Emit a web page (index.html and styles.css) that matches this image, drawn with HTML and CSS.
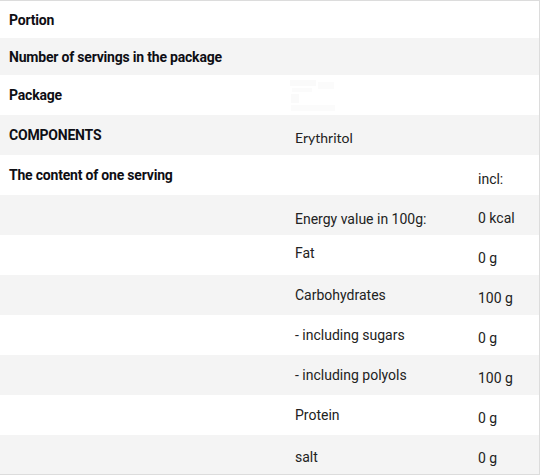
FILE: index.html
```html
<!DOCTYPE html>
<html>
<head>
<meta charset="utf-8">
<link rel="stylesheet" href="styles.css">
</head>
<body>
<table class="spec">
  <colgroup>
    <col class="c1"><col class="c2"><col class="c3">
  </colgroup>
  <tr class="short"><th>Portion</th><td></td><td></td></tr>
  <tr class="short alt"><th>Number of servings in the package</th><td></td><td></td></tr>
  <tr><th>Package</th><td class="pkg"><svg class="ghost" width="52" height="36" viewBox="0 0 52 36"><rect x="2" y="3" width="26" height="6" fill="#fafafa"/><rect x="30" y="5" width="16" height="7" fill="#fbfbfb"/><rect x="4" y="11" width="20" height="4" fill="#fbfbfb"/><rect x="3" y="17" width="8" height="9" fill="#fafafa"/><rect x="3" y="28" width="44" height="6" fill="#fbfbfb"/></svg></td><td></td></tr>
  <tr class="alt"><th>COMPONENTS</th><td class="val ery">Erythritol</td><td></td></tr>
  <tr><th>The content of one serving</th><td></td><td class="val incl">incl:</td></tr>
  <tr class="alt"><th></th><td class="lbl energy">Energy value in 100g:</td><td class="val">0 kcal</td></tr>
  <tr><th></th><td class="lbl fat">Fat</td><td class="val">0 g</td></tr>
  <tr class="alt"><th></th><td class="lbl">Carbohydrates</td><td class="val">100 g</td></tr>
  <tr><th></th><td class="lbl">- including sugars</td><td class="val">0 g</td></tr>
  <tr class="alt"><th></th><td class="lbl">- including polyols</td><td class="val">100 g</td></tr>
  <tr><th></th><td class="lbl">Protein</td><td class="val">0 g</td></tr>
  <tr class="alt"><th></th><td class="lbl salt">salt</td><td class="val">0 g</td></tr>
</table>
</body>
</html>
```
FILE: styles.css
```css
html, body {
  margin: 0;
  padding: 0;
  background: #ffffff;
}
.spec {
  width: 539px;
  border-collapse: collapse;
  table-layout: fixed;
  border-top: 1px solid #dcdcdc;
  border-right: 1px solid #dcdcdc;
  border-bottom: 1px solid #dcdcdc;
  font-family: Roboto, "Liberation Sans", sans-serif;
  font-size: 14px;
  line-height: 16px;
  color: #1a1a1a;
}
.c1 { width: 286px; }
.c2 { width: 183px; }
.c3 { width: 70px; }
.spec tr { height: 40px; background: #ffffff; }
.spec tr.alt { background: #f4f4f4; }
.spec tr.short { height: 37px; }
.spec th, .spec td {
  padding: 0 0 0 9px;
  vertical-align: top;
  text-align: left;
  box-sizing: border-box;
  height: 40px;
}
.spec tr.short th, .spec tr.short td { height: 37px; }
.spec th {
  font-weight: 700;
  color: #0e0e14;
  letter-spacing: -0.2px;
  padding-top: 12px;
}
.spec tr.short th { padding-top: 11px; }
.spec td.lbl { padding-top: 12px; color: #222222; }
.spec td.val { padding-top: 15px; color: #222222; }
.spec td.ery { padding-top: 15px; font-family: Lato, Roboto, sans-serif; }
.spec td.incl { padding-top: 16px; }
.spec td.energy { padding-top: 16px; }
.spec td.fat { padding-top: 10px; }
.spec td.salt { padding-top: 14px; }
.spec td.pkg { padding: 2px 0 0 2px; }
.ghost { display: block; }
```
